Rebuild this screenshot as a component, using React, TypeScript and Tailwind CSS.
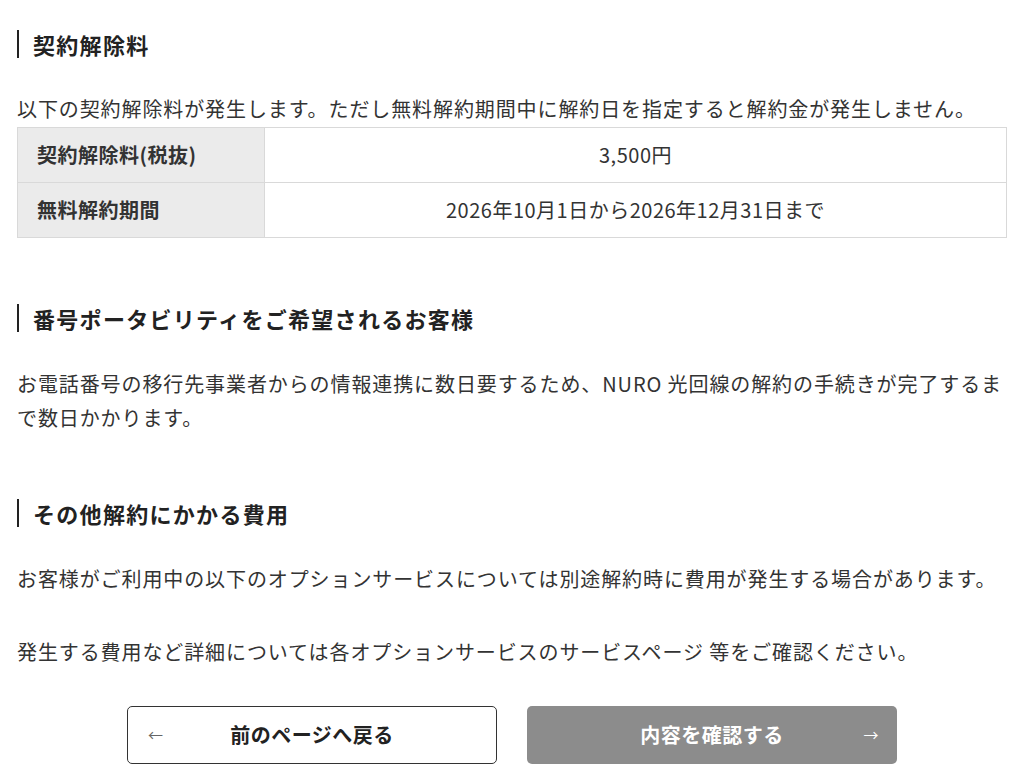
import React from "react";

const font = { fontFamily: '"Noto Sans CJK JP", "Noto Sans", sans-serif' };

function Heading({ children }: { children: React.ReactNode }) {
  return (
    <h2 className="border-l-2 border-[#222] pl-[14px] text-[22px] font-bold leading-[28px] tracking-[1.3px] text-[#222]">
      {children}
    </h2>
  );
}

export default function App() {
  return (
    <div className="bg-white text-[#333] px-[17px] pt-[30px] pb-[14px] w-[1024px]" style={font}>
      <section>
        <Heading>契約解除料</Heading>
        <p className="mt-[34px] text-[20px] leading-[34px] tracking-[0.9px]">
          以下の契約解除料が発生します。ただし無料解約期間中に解約日を指定すると解約金が発生しません。
        </p>
        <table className="mt-[1px] w-[990px] border-collapse text-[20px] tracking-[0.5px]">
          <tbody>
            <tr className="h-[55px]">
              <th className="w-[247px] border border-[#d9d9d9] bg-[#ebebeb] pl-[19px] text-left font-bold">
                契約解除料(税抜)
              </th>
              <td className="border border-[#d9d9d9] text-center">3,500円</td>
            </tr>
            <tr className="h-[55px]">
              <th className="w-[247px] border border-[#d9d9d9] bg-[#ebebeb] pl-[19px] text-left font-bold">
                無料解約期間
              </th>
              <td className="border border-[#d9d9d9] text-center">
                2026年10月1日から2026年12月31日まで
              </td>
            </tr>
          </tbody>
        </table>
      </section>

      <section className="mt-[66px]">
        <Heading>番号ポータビリティをご希望されるお客様</Heading>
        <p className="mt-[35px] text-[20px] leading-[34px] tracking-[0.9px]">
          お電話番号の移行先事業者からの情報連携に数日要するため、NURO 光回線の解約の手続きが完了するまで数日かかります。
        </p>
      </section>

      <section className="mt-[64px]">
        <Heading>その他解約にかかる費用</Heading>
        <p className="mt-[35px] text-[20px] leading-[34px] tracking-[0.9px]">
          お客様がご利用中の以下のオプションサービスについては別途解約時に費用が発生する場合があります。
        </p>
        <p className="mt-[39px] text-[20px] leading-[34px] tracking-[0.9px]">
          発生する費用など詳細については各オプションサービスのサービスページ 等をご確認ください。
        </p>
      </section>

      <div className="mt-[37px] flex justify-center gap-[30px]">
        <button className="relative flex h-[58px] w-[370px] items-center justify-center rounded-[5px] border-[1.5px] border-[#333] bg-white text-[20px] font-bold tracking-[0.5px] text-[#222]">
          <span className="absolute left-[20px] text-[15px] font-normal text-[#666]">←</span>
          前のページへ戻る
        </button>
        <button className="relative flex h-[58px] w-[370px] items-center justify-center rounded-[5px] bg-[#8c8c8c] text-[20px] font-bold tracking-[0.5px] text-white">
          内容を確認する
          <span className="absolute right-[18px] text-[15px] font-normal text-white">→</span>
        </button>
      </div>
    </div>
  );
}
